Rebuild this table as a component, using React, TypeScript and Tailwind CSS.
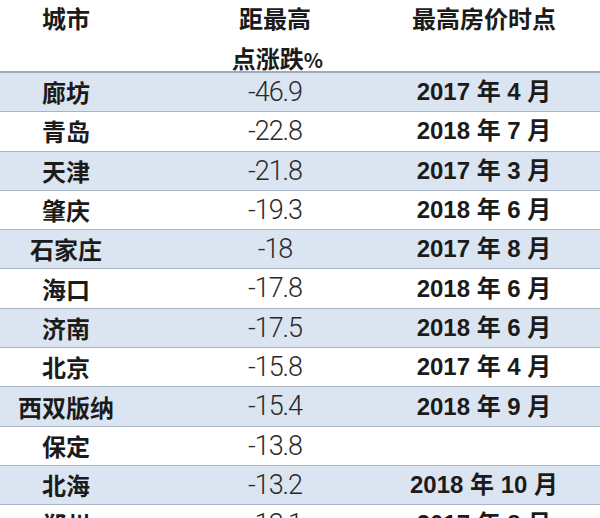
import React from "react";

const rows: [string, string, string][] = [
  ["廊坊", "-46.9", "2017 年 4 月"],
  ["青岛", "-22.8", "2018 年 7 月"],
  ["天津", "-21.8", "2017 年 3 月"],
  ["肇庆", "-19.3", "2018 年 6 月"],
  ["石家庄", "-18", "2017 年 8 月"],
  ["海口", "-17.8", "2018 年 6 月"],
  ["济南", "-17.5", "2018 年 6 月"],
  ["北京", "-15.8", "2017 年 4 月"],
  ["西双版纳", "-15.4", "2018 年 9 月"],
  ["保定", "-13.8", ""],
  ["北海", "-13.2", "2018 年 10 月"],
  ["郑州", "-13.1", "2017 年 8 月"],
];

const cjk = { fontFamily: '"Noto Sans CJK SC", sans-serif' };
const num = { fontFamily: 'Roboto, "Liberation Sans", sans-serif' };
const date = { fontFamily: '"Liberation Sans", "Noto Sans CJK SC", sans-serif' };

export default function App() {
  return (
    <div className="w-[600px] h-[518px] overflow-hidden bg-white text-[#1b1b1b]">
      <div className="flex h-[73px] border-b-2 border-[#9eabbd]">
        <div className="w-[132px] flex justify-center">
          <div className="text-[24px] font-bold leading-[35px]" style={cjk}>城市</div>
        </div>
        <div className="w-[286px] flex flex-col items-center">
          <div className="text-[24px] font-bold leading-[35px]" style={cjk}>距最高</div>
          <div className="text-[24px] font-bold leading-[35px] mt-[5px] pl-[4px]" style={cjk}>
            点涨跌<span className="text-[20px] tracking-[-1px]">%</span>
          </div>
        </div>
        <div className="w-[132px] flex justify-center">
          <div className="text-[24px] font-bold leading-[35px] whitespace-nowrap" style={cjk}>最高房价时点</div>
        </div>
      </div>
      {rows.map(([city, pct, when], i) => (
        <div
          key={i}
          className={
            "flex h-[39.3px] box-border border-b border-[#aab6c8] items-center " +
            (i % 2 === 0 ? "bg-[#dbe4f1]" : "bg-white")
          }
        >
          <div className="w-[132px] flex justify-center whitespace-nowrap text-[24px] font-bold" style={cjk}>
            {city}
          </div>
          <div className="w-[286px] flex justify-center text-[27px] font-light tracking-[-1px] text-[#2a2a2a]" style={num}>
            {pct}
          </div>
          <div className="w-[132px] flex justify-center whitespace-nowrap text-[24px] font-bold" style={date}>
            {when}
          </div>
        </div>
      ))}
    </div>
  );
}
